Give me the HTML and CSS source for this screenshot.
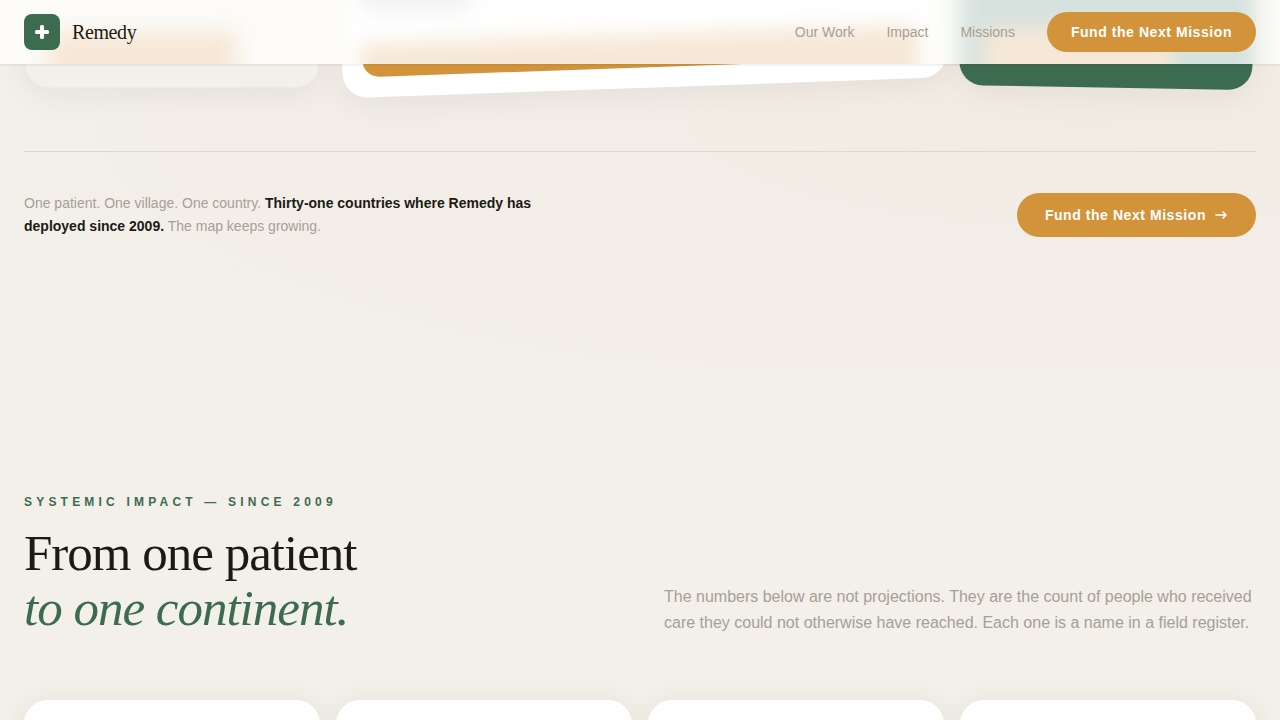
FILE: index.html
```html
<!DOCTYPE html>
<html lang="en">
<head>
  <meta charset="UTF-8" />
  <meta name="viewport" content="width=device-width, initial-scale=1.0"/>
  <title>Remedy</title>
  <link rel="stylesheet" href="styles.css">
</head>
<body>

  <!-- Sticky header -->
  <header class="site-header">
    <div class="frost" aria-hidden="true">
      <div class="frost-left"><div class="frost-bar"></div></div>
      <div class="frost-middle">
        <div class="frost-line"></div>
        <div class="frost-bar"></div>
      </div>
      <div class="frost-right"><div class="frost-bar"></div></div>
    </div>
    <a href="#" class="brand">
      <svg class="brand-mark" viewBox="0 0 36 36" aria-hidden="true">
        <rect width="36" height="36" rx="8" fill="#3d6b4f"/>
        <rect x="16" y="11" width="4" height="14" rx="1.500" fill="#fff"/>
        <rect x="11" y="16" width="14" height="4" rx="1.500" fill="#fff"/>
      </svg>
      <span>Remedy</span>
    </a>
    <nav class="nav">
      <a href="#">Our Work</a>
      <a href="#impact">Impact</a>
      <a href="#">Missions</a>
      <button type="button" class="btn">Fund the Next Mission</button>
    </nav>
  </header>

  <!-- Hero -->
  <section class="hero">
    <div class="hero-cards">
      <div class="hero-card card-left"></div>
      <div class="hero-card card-middle">
        <div class="card-bar"></div>
      </div>
      <div class="hero-card card-right"></div>
    </div>

    <div class="hero-footer">
      <p>One patient. One village. One country. <strong>Thirty-one countries where Remedy has deployed since 2009.</strong> The map keeps growing.</p>
      <button type="button" class="btn btn-large">
        Fund the Next Mission
        <svg width="14" height="14" viewBox="0 0 14 14" fill="none" stroke="#fff" stroke-width="1.600" stroke-linecap="round" stroke-linejoin="round" aria-hidden="true">
          <path d="M2 7h10M9 4l3 3-3 3"/>
        </svg>
      </button>
    </div>
  </section>

  <!-- Impact -->
  <section class="impact" id="impact">
    <div class="impact-head">
      <div>
        <p class="label">Systemic Impact — Since 2009</p>
        <h2>From one patient<br><em>to one continent.</em></h2>
      </div>
      <p class="intro">The numbers below are not projections. They are the count of people who received care they could not otherwise have reached. Each one is a name in a field register.</p>
    </div>
    <div class="stats">
      <div class="stat"></div>
      <div class="stat"></div>
      <div class="stat"></div>
      <div class="stat"></div>
    </div>
  </section>

</body>
</html>
```
FILE: styles.css
```css
:root {
  --bg: #f3f0e9;
  --ink: #1c1a14;
  --muted: #a69f94;
  --green: #3d6b4f;
  --amber: #d2933b;
  --serif: "Liberation Serif", serif;
  --sans: "Liberation Sans", sans-serif;
}

* {
  box-sizing: border-box;
}

body {
  margin: 0;
  font-family: var(--sans);
  background-color: var(--bg);
  color: var(--ink);
}

h2, p {
  margin: 0;
}

a {
  color: inherit;
  text-decoration: none;
}

/* Header */
.site-header {
  position: sticky;
  top: 0;
  z-index: 10;
  display: flex;
  align-items: center;
  justify-content: space-between;
  height: 64px;
  padding: 0 24px;
  overflow: hidden;
  background-color: #fcfbf8;
  box-shadow: 0 1px 2px rgba(28, 26, 20, 0.1);
}

/* Frosted glass: pale, blurred shapes of the cards behind the header */
.frost {
  position: absolute;
  inset: -32px 0;
  z-index: -1;
  display: grid;
  grid-template-columns: 1fr 2fr 1fr;
  gap: 24px;
  padding: 0 24px;
  filter: blur(10px);
}

.frost-left {
  padding: 64px 24px 0;
}

.frost-middle {
  padding: 0 16px;
  background-color: white;
}

.frost-right {
  padding: 60px 24px 0;
  background-color: #d6e2dd;
}

.frost-bar {
  height: 80px;
  background-color: #f6e8d7;
}

.frost-left .frost-bar,
.frost-right .frost-bar {
  width: 188px;
}

.frost-middle .frost-bar {
  margin-top: 22px;
  transform: rotate(-2deg);
}

.frost-line {
  width: 112px;
  height: 44px;
  background-color: #f2f2f3;
}

.brand {
  display: flex;
  align-items: center;
  gap: 12px;
  font-family: var(--serif);
  font-size: 20px;
  letter-spacing: -0.02em;
}

.brand-mark {
  width: 36px;
  height: 36px;
}

.nav {
  display: flex;
  align-items: center;
  gap: 32px;
  font-size: 14px;
  color: var(--muted);
}

.btn {
  display: inline-flex;
  align-items: center;
  gap: 8px;
  height: 40px;
  padding: 0 24px;
  border: none;
  border-radius: 24px;
  background-color: var(--amber);
  color: white;
  font-family: inherit;
  font-size: 14px;
  font-weight: 700;
  letter-spacing: 0.04em;
  white-space: nowrap;
  cursor: pointer;
}

.btn-large {
  height: 44px;
  padding: 0 28px;
}

/* Hero, tucked under the header */
.hero {
  margin-top: -263px;
  padding: 0 24px 128px;
  background-image: radial-gradient(ellipse at 85% 55%, rgba(226, 190, 180, 0.1), transparent 75%);
}

.hero-cards {
  display: grid;
  grid-template-columns: 1fr 2fr 1fr;
  gap: 24px;
}

.hero-card {
  display: flex;
  flex-direction: column;
  justify-content: flex-end;
  height: 288px;
  padding: 20px;
  border-radius: 24px;
  box-shadow: 0 4px 32px rgba(28, 26, 20, 0.07);
}

.card-left {
  background-color: var(--bg);
  transform: scale(0.99);
}

.card-middle {
  background-color: white;
  transform: translateY(-4px) rotate(-2deg) scale(1.02);
}

.card-bar {
  height: 40px;
  border-radius: 16px;
  background-color: var(--amber);
}

.card-right {
  background-color: var(--green);
  transform: rotate(1deg) scale(0.99);
}

.hero-footer {
  display: flex;
  align-items: center;
  justify-content: space-between;
  gap: 24px;
  margin-top: 62px;
  padding-top: 40px;
  border-top: 1px solid #dcd8d0;
}

.hero-footer p {
  max-width: 512px;
  font-size: 14px;
  line-height: 23px;
  color: var(--muted);
}

.hero-footer strong {
  color: var(--ink);
}

/* Impact */
.impact {
  padding: 128px 24px;
}

.impact-head {
  display: grid;
  grid-template-columns: 1fr 1fr;
  align-items: end;
  gap: 48px;
  margin-bottom: 64px;
}

.label {
  margin-bottom: 16px;
  font-size: 12px;
  font-weight: 700;
  line-height: 16px;
  letter-spacing: 0.35em;
  text-transform: uppercase;
  color: var(--green);
}

h2 {
  font-family: var(--serif);
  font-size: 51px;
  font-weight: 400;
  line-height: 55px;
  letter-spacing: -1px;
}

h2 em {
  color: var(--green);
}

.intro {
  font-size: 16px;
  line-height: 26px;
  color: var(--muted);
}

.stats {
  display: grid;
  grid-template-columns: repeat(4, 1fr);
  gap: 16px;
}

.stat {
  min-height: 240px;
  border-radius: 24px;
  background-color: white;
  box-shadow: 0 4px 32px rgba(28, 26, 20, 0.07);
}
```
